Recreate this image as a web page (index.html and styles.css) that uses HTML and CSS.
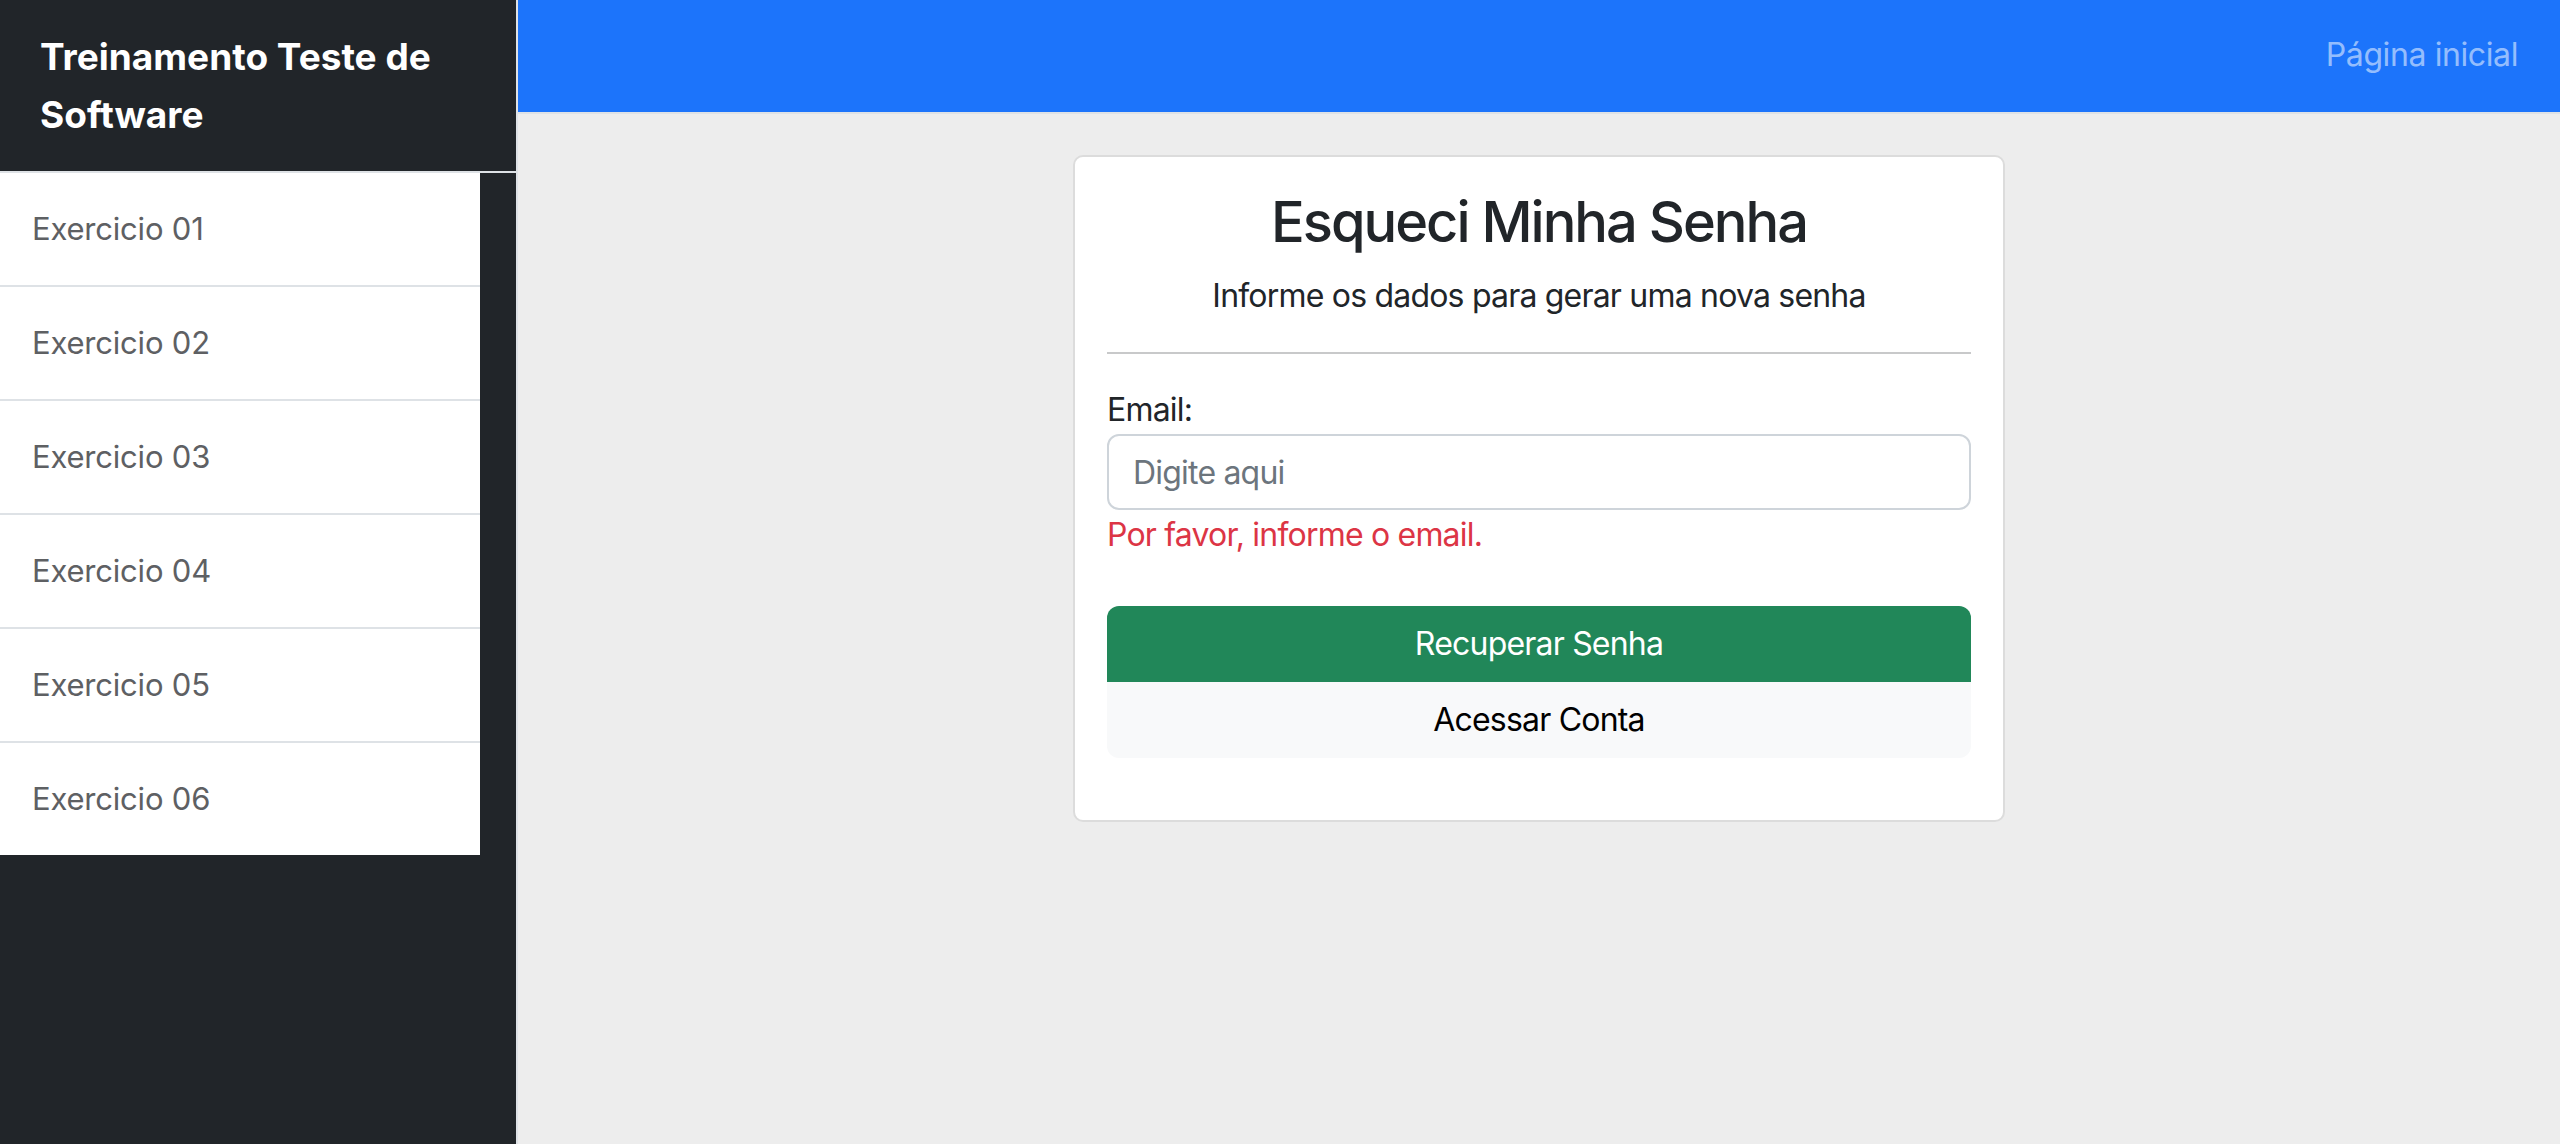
FILE: index.html
```html
<!DOCTYPE html>
<html lang="pt-BR">
<head>
<meta charset="utf-8">
<title>Esqueci Minha Senha</title>
<link rel="stylesheet" href="styles.css">
</head>
<body>
<div class="layout">
  <aside class="sidebar">
    <div class="sidebar-heading">Treinamento Teste de Software</div>
    <div class="list-group">
      <a class="list-item" href="#">Exercicio 01</a>
      <a class="list-item" href="#">Exercicio 02</a>
      <a class="list-item" href="#">Exercicio 03</a>
      <a class="list-item" href="#">Exercicio 04</a>
      <a class="list-item" href="#">Exercicio 05</a>
      <a class="list-item" href="#">Exercicio 06</a>
    </div>
  </aside>
  <div class="page">
    <nav class="topbar">
      <a class="nav-link" href="#">Página inicial</a>
    </nav>
    <main class="content">
      <div class="card">
        <h3 class="card-title">Esqueci Minha Senha</h3>
        <p class="card-subtitle">Informe os dados para gerar uma nova senha</p>
        <hr class="divider">
        <form class="form">
          <label class="label" for="email">Email:</label>
          <input class="input" id="email" type="email" placeholder="Digite aqui">
          <div class="feedback">Por favor, informe o email.</div>
          <div class="btn-group">
            <button type="button" class="btn btn-success">Recuperar Senha</button>
            <button type="button" class="btn btn-light">Acessar Conta</button>
          </div>
        </form>
      </div>
    </main>
  </div>
</div>
</body>
</html>
```

FILE: styles.css
```css
* { box-sizing: border-box; }
html, body { margin: 0; padding: 0; height: 100%; }
body {
  font-family: Inter, "Noto Sans", "Liberation Sans", sans-serif;
  font-size: 32px;
  line-height: 1.5;
  color: #212529;
  background: #ededed;
  letter-spacing: -0.8px;
}
.layout { display: flex; min-height: 1144px; }
.sidebar {
  width: 518px;
  flex: 0 0 518px;
  background: #212529;
  border-right: 2px solid #dee2e6;
}
.sidebar-heading {
  color: #fff;
  font-weight: 700;
  font-size: 37px;
  line-height: 58px;
  padding: 28px 40px 27px 40px;
  border-bottom: 2px solid #dee2e6;
  letter-spacing: 0;
}
.list-group { width: 480px; display: flex; flex-direction: column; }
.list-item {
  display: block;
  background: #fff;
  color: #5e6063;
  text-decoration: none;
  padding: 32px;
  height: 114px;
  border-bottom: 2px solid #dee2e6;
  font-size: 31px;
  line-height: 48px;
  letter-spacing: -0.2px;
}
.list-item:last-child { border-bottom: 0; height: 112px; }
.page { flex: 1; display: flex; flex-direction: column; }
.topbar {
  height: 114px;
  background: #1c74fb;
  border-bottom: 2px solid #dee2e6;
  display: flex;
  align-items: center;
  justify-content: flex-end;
  padding: 0 42px 2px 0;
}
.nav-link {
  color: rgba(255,255,255,0.55);
  text-decoration: none;
  font-size: 32px;
  line-height: 48px;
  letter-spacing: -0.4px;
}
.content { flex: 1; display: flex; justify-content: center; align-items: flex-start; padding-top: 41px; }
.card {
  width: 932px;
  background: #fff;
  border: 2px solid #dcdcdc;
  border-radius: 10px;
  padding: 32px;
}
.card-title {
  margin: 0 0 16px;
  text-align: center;
  font-size: 56px;
  font-weight: 500;
  line-height: 1.2;
  letter-spacing: -2px;
}
.card-subtitle { margin: 0 0 32px; text-align: center; }
.divider { margin: 0 0 32px; border: 0; border-top: 2px solid #c8c9ca; }
.form { display: flex; flex-direction: column; margin-bottom: 30px; }
.label { display: block; }
.input {
  height: 76px;
  border: 2px solid #ced4da;
  border-radius: 12px;
  padding: 0 24px;
  font: inherit;
  letter-spacing: -0.8px;
  color: #212529;
}
.input::placeholder { color: #6c757d; }
.feedback { color: #dc3545; margin-top: 1px; margin-bottom: 47px; }
.btn-group { display: flex; flex-direction: column; }
.btn {
  height: 76px;
  border: 0;
  font: inherit;
  letter-spacing: -0.8px;
  cursor: pointer;
}
.btn-success { background: #218759; color: #fff; border-radius: 12px 12px 0 0; }
.btn-light { background: #f8f9fa; color: #000; border-radius: 0 0 12px 12px; }
```
